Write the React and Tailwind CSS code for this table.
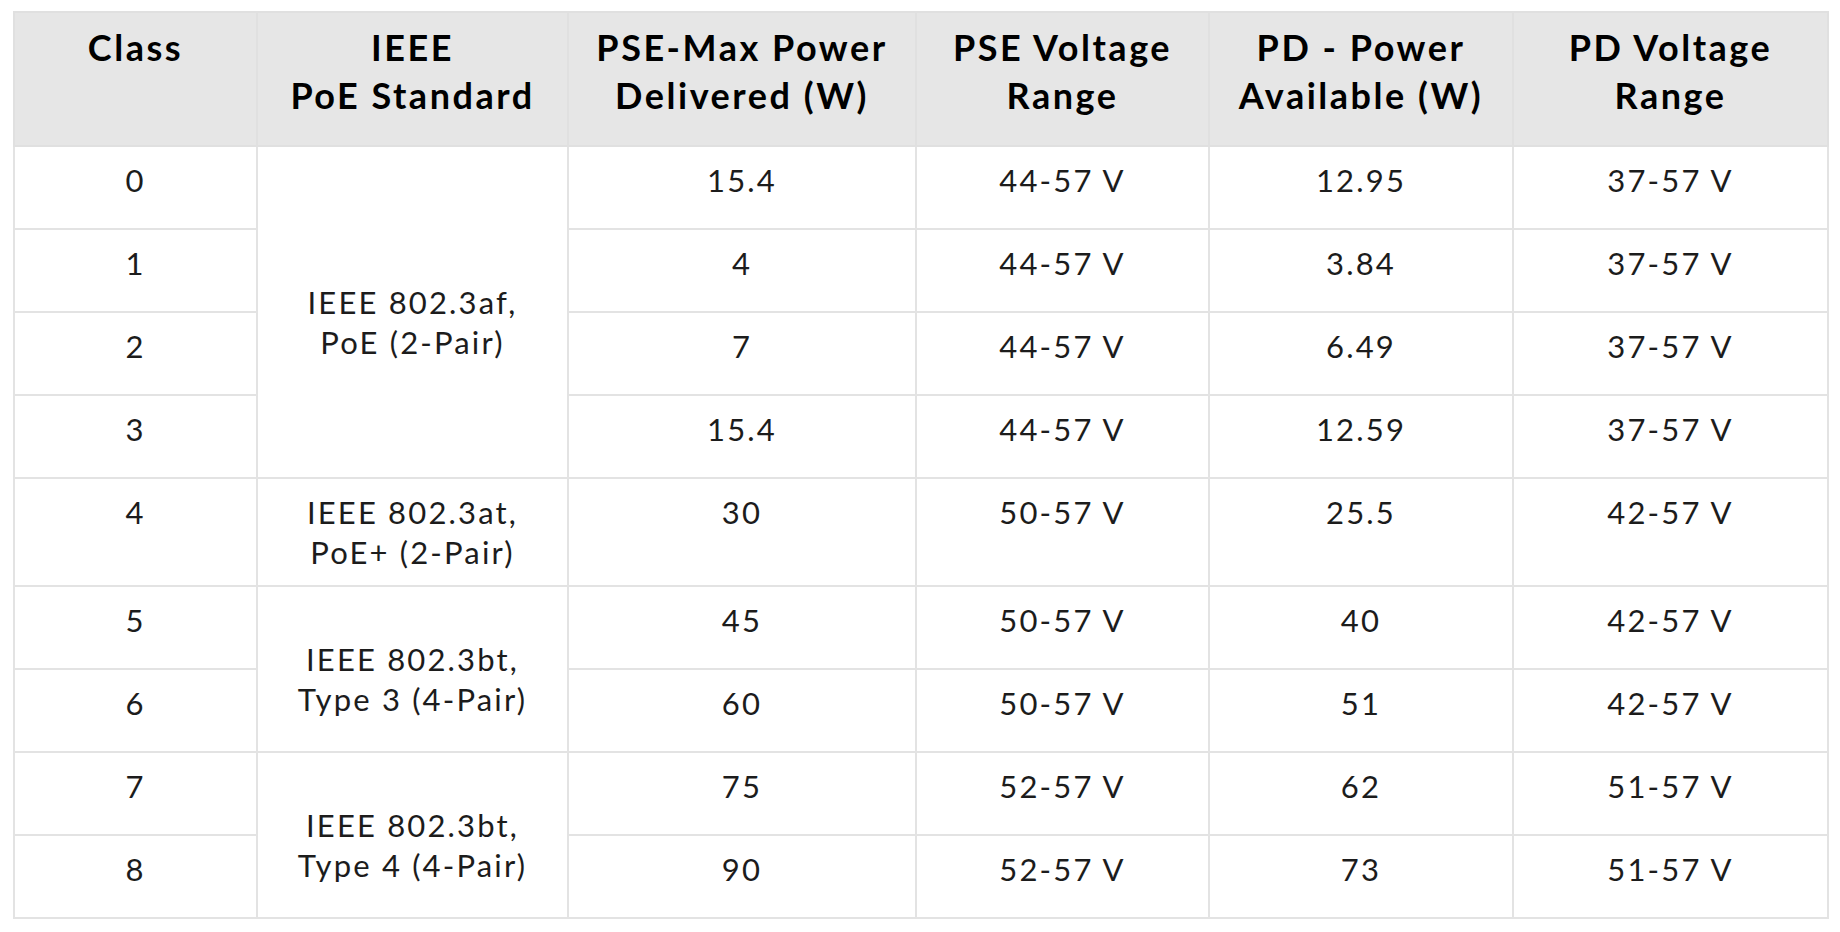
import React from 'react';

const headers = [
  ['Class'],
  ['IEEE', 'PoE Standard'],
  ['PSE-Max Power', 'Delivered (W)'],
  ['PSE Voltage', 'Range'],
  ['PD - Power', 'Available (W)'],
  ['PD Voltage', 'Range'],
];

// standard: [lines, rowSpan] only on the first row of each group
const rows = [
  { cls: '0', std: [['IEEE 802.3af,', 'PoE (2-Pair)'], 4], pse: '15.4', pseV: '44-57 V', pd: '12.95', pdV: '37-57 V' },
  { cls: '1', pse: '4', pseV: '44-57 V', pd: '3.84', pdV: '37-57 V' },
  { cls: '2', pse: '7', pseV: '44-57 V', pd: '6.49', pdV: '37-57 V' },
  { cls: '3', pse: '15.4', pseV: '44-57 V', pd: '12.59', pdV: '37-57 V' },
  { cls: '4', std: [['IEEE 802.3at,', 'PoE+ (2-Pair)'], 1], pse: '30', pseV: '50-57 V', pd: '25.5', pdV: '42-57 V' },
  { cls: '5', std: [['IEEE 802.3bt,', 'Type 3 (4-Pair)'], 2], pse: '45', pseV: '50-57 V', pd: '40', pdV: '42-57 V' },
  { cls: '6', pse: '60', pseV: '50-57 V', pd: '51', pdV: '42-57 V' },
  { cls: '7', std: [['IEEE 802.3bt,', 'Type 4 (4-Pair)'], 2], pse: '75', pseV: '52-57 V', pd: '62', pdV: '51-57 V' },
  { cls: '8', pse: '90', pseV: '52-57 V', pd: '73', pdV: '51-57 V' },
];

const cell = 'border-2 border-[#e3e3e3] text-center align-top pt-[13px] pb-[13px] px-1';

export default function App() {
  return (
    <div className="bg-white min-h-screen px-[13px] pt-[11px] text-[#1c1c1c]" style={{ fontFamily: 'Lato, "Noto Sans", sans-serif' }}>
      <table className="w-[1814px] table-fixed border-collapse">
        <colgroup>
          <col className="w-[243px]" />
          <col className="w-[311px]" />
          <col className="w-[348px]" />
          <col className="w-[293px]" />
          <col className="w-[304px]" />
          <col className="w-[315px]" />
        </colgroup>
        <thead>
          <tr className="h-[134px] bg-[#e6e6e6]">
            {headers.map((h, i) => (
              <th
                key={i}
                className="border-2 border-[#e0e0e0] align-top pt-[10px] px-1 text-[36px] leading-[48px] font-bold tracking-[0.07em] text-black"
              >
                {h.map((line) => (
                  <div key={line}>{line}</div>
                ))}
              </th>
            ))}
          </tr>
        </thead>
        <tbody className="text-[31px] leading-[40px] tracking-[0.07em]">
          {rows.map((r) => (
            <tr key={r.cls} className="h-[83px]">
              <td className={cell}>{r.cls}</td>
              {r.std && (
                <td
                  rowSpan={r.std[1]}
                  className={
                    r.std[1] > 1
                      ? 'border-2 border-[#e3e3e3] text-center align-middle pt-[34px] pb-[14px] px-1'
                      : cell
                  }
                >
                  {r.std[0].map((line) => (
                    <div key={line}>{line}</div>
                  ))}
                </td>
              )}
              <td className={cell}>{r.pse}</td>
              <td className={cell}>{r.pseV}</td>
              <td className={cell}>{r.pd}</td>
              <td className={cell}>{r.pdV}</td>
            </tr>
          ))}
        </tbody>
      </table>
    </div>
  );
}
